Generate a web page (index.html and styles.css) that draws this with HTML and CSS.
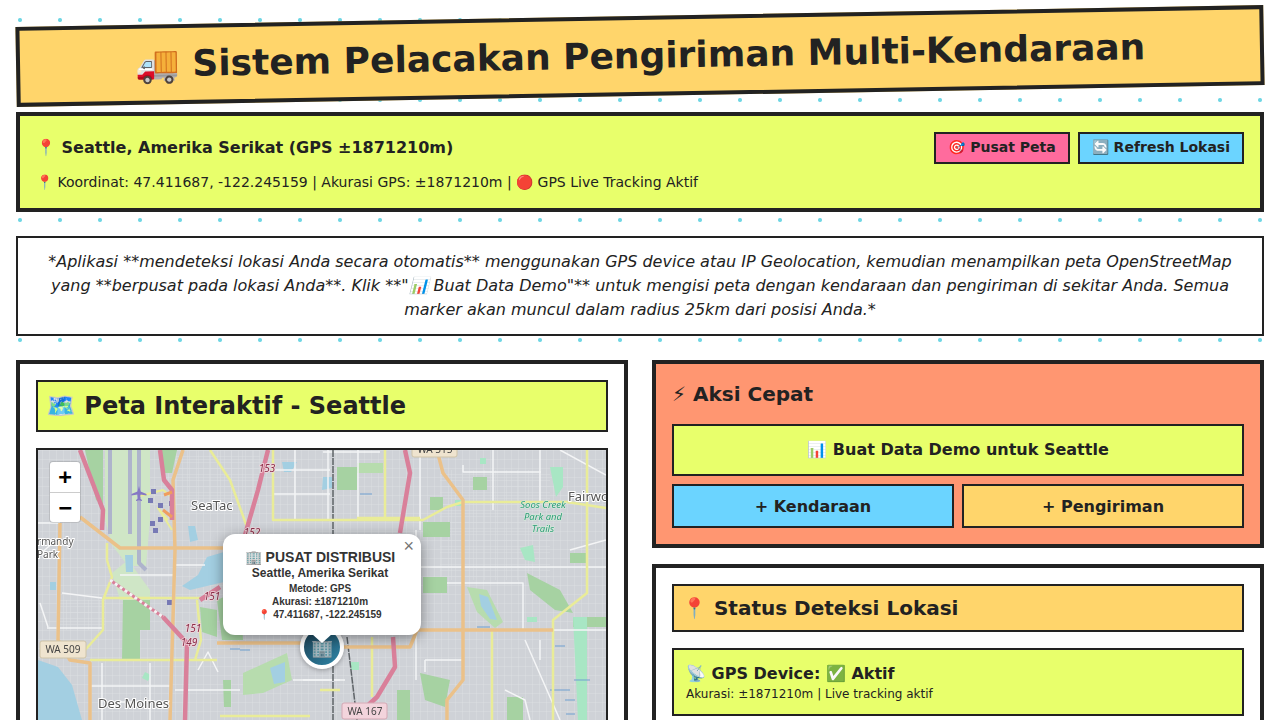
FILE: index.html
```html
<!DOCTYPE html>
<html lang="id">
  <head>
    <meta charset="UTF-8" />
    <meta name="viewport" content="width=device-width, initial-scale=1" />
    <title>Sistem Pelacakan Pengiriman Multi-Kendaraan</title>
    <link rel="stylesheet" href="styles.css">
  </head>
  <body>
    <header class="page-title">
      <h1>🚚 Sistem Pelacakan Pengiriman Multi-Kendaraan</h1>
    </header>

    <section class="location-bar">
      <div class="location-top">
        <strong class="location-name">📍 Seattle, Amerika Serikat (GPS ±1871210m)</strong>
        <div class="location-buttons">
          <button class="btn-small pink">🎯 Pusat Peta</button>
          <button class="btn-small blue">🔄 Refresh Lokasi</button>
        </div>
      </div>
      <p class="location-coords">📍 Koordinat: 47.411687, -122.245159 | Akurasi GPS: ±1871210m | 🔴 GPS Live Tracking Aktif</p>
    </section>

    <p class="intro">*Aplikasi **mendeteksi lokasi Anda secara otomatis** menggunakan GPS device atau IP Geolocation, kemudian menampilkan peta OpenStreetMap yang **berpusat pada lokasi Anda**. Klik **"📊 Buat Data Demo"** untuk mengisi peta dengan kendaraan dan pengiriman di sekitar Anda. Semua marker akan muncul dalam radius 25km dari posisi Anda.*</p>

    <div class="columns">
      <section class="card">
        <h2 class="card-heading lime">🗺️ Peta Interaktif - Seattle</h2>
        <div class="map">
          <svg class="map-tiles" viewBox="38 450 568 398" width="568" height="398" xmlns="http://www.w3.org/2000/svg">
            <defs>
              <pattern id="streets" width="7" height="9" patternUnits="userSpaceOnUse">
                <path class="street-grid" d="M0 0H7M0 0V9" />
              </pattern>
              <pattern id="streets-wide" width="11" height="6" patternUnits="userSpaceOnUse">
                <path class="street-grid" d="M0 0H11M0 0V6" />
              </pattern>
            </defs>
            <rect class="land" x="38" y="450" width="568" height="398" />
            <rect fill="url(#streets)" x="38" y="450" width="568" height="398" />
            <rect fill="url(#streets-wide)" x="440" y="470" width="110" height="110" />
            <rect fill="url(#streets-wide)" x="60" y="600" width="45" height="30" />
            <rect fill="url(#streets-wide)" x="175" y="450" width="85" height="60" />

            <!-- parks and woods -->
            <path class="open" d="M105 450H150V520L146 566H128L112 545 105 520Z" />
            <path class="open" d="M112 573L128 560 150 590 150 604 120 600Z" />
            <path class="wood" d="M85 450H103V505L96 500Z" />
            <path class="wood" d="M160 450H177L172 473 163 473Z" />
            <path class="wood" d="M123 600H150V630H140V660H122Z" />
            <path class="wood" d="M217 600L240 590 243 640 222 640Z" />
            <path class="wood" d="M200 607L217 610 217 637 202 632Z" />
            <path class="wood soft" d="M243 673L287 653 292 680 263 693 243 695Z" />
            <path class="wood" d="M223 680H231V707H224Z" />
            <path class="wood" d="M337 467H357V490H337Z" />
            <path class="wood soft" d="M357 463H383V473H357Z" />
            <path class="wood" d="M430 497H443V510H430ZM423 522H450V537H423ZM423 577H447V593H423Z" />
            <path class="wood" d="M473 477H487V490H473ZM570 553H587V563H570ZM573 617H606V627H573Z" />
            <path class="wood" d="M527 573L560 590 573 613 555 610 530 590Z" />
            <path class="wood" d="M507 697H523V720H507ZM420 673L450 680 445 707 425 700ZM397 690H410V720H397Z" />
            <path class="wood soft" d="M467 587L487 590 503 622 495 628 477 612Z" />
            <path class="mint" d="M550 467H563V487L556 497ZM520 548L533 545 535 562 525 560Z" />
            <path class="mint" d="M573 617H587V720H578Z" />
            <path class="mint" d="M527 617H537V622H527ZM145 672L151 675 148 681 142 678ZM351 662H359V670H351Z" />
            <path class="mint" d="M480 458H486V464H480ZM455 500H462V506H455Z" />

            <!-- water -->
            <path class="water" d="M38 660L58 667 72 685 82 720H38Z" />
            <path class="water" d="M207 557L224 552 224 582 190 590 182 586 198 575Z" />
            <path class="water" d="M270 668L285 662 285 682 274 684ZM125 555L133 555 133 572 126 572Z" />
            <path class="water" d="M479 594L488 597 497 620 490 619 481 606Z" />
            <path class="water" d="M282 462L297 462 291 472 284 472ZM323 477L332 477 332 488 322 490Z" />
            <path class="water" d="M188 526L195 526 198 540 190 542ZM50 582L56 582 56 590 50 590Z" />
            <path class="stream" d="M360 494H372M477 627H490M550 690H570M565 700H575M566 714H575M574 680H590M240 650H250M230 649H240M555 646H565" />

            <!-- minor roads -->
            <path class="road-white" d="M38 523H60M38 556L56 540M62 593L102 598M47 628H103M40 603L48 627M120 575H175M175 565H205" />
            <path class="road-white" d="M102 663V720M150 663V720M90 686H170M175 690H240M108 702H170" />
            <path class="road-white" d="M198 670L208 652 218 672M303 680H340M230 716H310" />
            <path class="road-white" d="M295 450V520M273 470H330M273 494H330M323 452H380M293 680H345" />
            <path class="road-white" d="M328 450V520M358 450V518M420 450V530M416 530L416 560" />
            <path class="road-white" d="M463 465V472H541M493 450V510M540 450V502M420 567H606M447 583H523V630" />
            <path class="road-white" d="M425 660H462M425 660V672M416 600V680M560 450L606 475M606 630H553M606 540L570 550" />
            <path class="road-white" d="M505 690L525 700 530 720M540 640V660M525 640L560 720" />

            <!-- railway and airport taxiways -->
            <path class="rail" d="M333 450V720M347 637L357 720" />
            <path class="runway" d="M110 450V534M130 450V534M139 450V563L146 570" />
            <path class="taxi" d="M140 496L163 490 172 497M168 520L158 508 172 530" />
            <path class="airport" d="M151 489h5v5h-5zM148 498h5v5h-5zM158 503h5v5h-5zM169 501h5v5h-5zM150 521h5v5h-5zM158 517h5v5h-5zM153 528h5v5h-5zM167 600h5v5h-5z" />
            <path class="plane" d="M139 486l1.500 5.500 6 2.500v1.500l-6-1-.5 4 2 1.500v1l-3-.8-3 .8v-1l2-1.500-.5-4-6 1v-1.500l6-2.500z" />

            <!-- secondary roads -->
            <path class="road-yellow" d="M210 450L230 480 247 527M273 450V520H423L447 507 463 502H567L606 508" />
            <path class="road-yellow" d="M587 450V593L553 620V720M492 630V720M372 637V697M385 450V520M357 518H420" />
            <path class="road-yellow" d="M103 598H200M197 600L201 640 195 660M107 560L112 577 103 600V630L85 650M90 660H217" />
            <path class="road-yellow" d="M320 690H340M220 716H310M107 543L107 560" />

            <!-- primary roads -->
            <path class="road-orange" d="M183 450L173 480 175 550 170 720M80 517L120 548H223M60 523L58 640 70 660 90 663V720" />
            <path class="road-orange" d="M217 643H303M343 647H410L417 630H553M437 450L443 473 463 500V680L447 700V720" />

            <!-- motorways -->
            <path class="road-pink" d="M80 450L103 510 102 530M160 450L164 480 172 490 172 520" />
            <path class="road-pink" d="M268 450L258 490 245 535M405 450L410 473 400 533M393 637L395 667 377 697 365 708" />
            <path class="road-pink" d="M163 617L187 643 185 720M220 587L200 600" />
            <path class="road-pink-thin" d="M110 580L163 617" />
            <path class="road-dash" d="M110 580L163 617" />
            <path class="road-link" d="M163 510L172 517M164 495L172 492" />

            <!-- labels -->
            <text class="label" x="191" y="510">SeaTac</text>
            <text class="label small" x="37" y="545">rmandy</text>
            <text class="label small" x="37" y="558">Park</text>
            <text class="label" x="98" y="708">Des Moines</text>
            <text class="label" x="568" y="501">Fairwood</text>
            <text class="park-label" x="543" y="508">Soos Creek</text>
            <text class="park-label" x="543" y="520">Park and</text>
            <text class="park-label" x="543" y="532">Trails</text>
            <text class="ref" x="267" y="472">153</text>
            <text class="ref" x="252" y="536">152</text>
            <text class="ref" x="212" y="600">151</text>
            <text class="ref" x="193" y="632">151</text>
            <text class="ref" x="189" y="646">149</text>

            <rect class="shield" x="40" y="641" width="46" height="17" rx="2" />
            <text class="shield-text" x="63" y="653">WA 509</text>
            <rect class="shield" x="412" y="438" width="45" height="19" rx="2" />
            <text class="shield-text" x="435" y="453">WA 515</text>
            <rect class="shield pinkish" x="342" y="703" width="45" height="16" rx="2" />
            <text class="shield-text" x="365" y="715">WA 167</text>
          </svg>

          <div class="zoom-control">
            <span class="zoom-btn">+</span>
            <span class="zoom-btn">−</span>
          </div>

          <div class="marker"><span class="marker-icon">🏢</span></div>

          <div class="popup">
            <span class="popup-close">×</span>
            <div class="popup-title">🏢 PUSAT DISTRIBUSI</div>
            <div class="popup-sub">Seattle, Amerika Serikat</div>
            <div class="popup-line">Metode: GPS</div>
            <div class="popup-line">Akurasi: ±1871210m</div>
            <div class="popup-line">📍 47.411687, -122.245159</div>
            <span class="popup-tip"></span>
          </div>
        </div>
      </section>

      <div class="side">
        <section class="card orange">
          <h3 class="quick-title">⚡ Aksi Cepat</h3>
          <button class="btn-big lime">📊 Buat Data Demo untuk Seattle</button>
          <div class="btn-row">
            <button class="btn-mid blue">+ Kendaraan</button>
            <button class="btn-mid yellow">+ Pengiriman</button>
          </div>
        </section>

        <section class="card">
          <h2 class="card-heading yellow status-heading">📍 Status Deteksi Lokasi</h2>
          <div class="status-item">
            <div class="status-name">📡 GPS Device: ✅ Aktif</div>
            <div class="status-note">Akurasi: ±1871210m | Live tracking aktif</div>
          </div>
        </section>
      </div>
    </div>
  </body>
</html>
```

FILE: styles.css
```css
body {
  margin: 0;
  padding: 16px;
  font-family: "DejaVu Sans", sans-serif;
  color: #222;
  background-color: #fff;
  background-image: radial-gradient(circle, #6fd6e4 1.5px, transparent 2.5px);
  background-size: 40px 40px;
}

h1, h2, h3, p {
  margin: 0;
}

button {
  font-family: inherit;
  color: #222;
  cursor: pointer;
}

.lime { background-color: #e8ff6b; }
.yellow { background-color: #ffd56b; }
.blue { background-color: #6bd4ff; }
.pink { background-color: #ff6b9d; }

.page-title {
  height: 80px;
  box-sizing: border-box;
  margin-bottom: 16px;
  display: flex;
  align-items: center;
  justify-content: center;
  background-color: #ffd56b;
  border: 4px solid #222;
  transform: rotate(-1deg);
}

.page-title h1 {
  font-size: 36px;
  font-weight: bold;
}

.location-bar {
  height: 100px;
  box-sizing: border-box;
  padding: 16px;
  margin-bottom: 24px;
  background-color: #e8ff6b;
  border: 4px solid #222;
}

.location-top {
  display: flex;
  align-items: center;
  justify-content: space-between;
}

.location-name {
  padding-bottom: 2px;
  font-size: 16px;
}

.location-buttons {
  display: flex;
  gap: 8px;
}

.btn-small {
  height: 32px;
  padding: 0 12px 2px;
  font-size: 14px;
  font-weight: bold;
  border: 2px solid #222;
}

.location-coords {
  margin-top: 8px;
  font-size: 14px;
  line-height: 20px;
}

.intro {
  padding: 12px 16px;
  margin-bottom: 24px;
  font-size: 16px;
  font-style: italic;
  line-height: 24px;
  text-align: center;
  background-color: #fff;
  border: 2px solid #222;
}

.columns {
  display: grid;
  grid-template-columns: 1fr 1fr;
  gap: 24px;
  align-items: start;
}

.side {
  display: flex;
  flex-direction: column;
  gap: 16px;
}

.card {
  padding: 16px;
  background-color: #fff;
  border: 4px solid #222;
}

.card.orange {
  background-color: #ff9671;
}

.card-heading {
  height: 52px;
  box-sizing: border-box;
  display: flex;
  align-items: center;
  padding: 0 8px;
  margin-bottom: 16px;
  font-size: 24px;
  border: 2px solid #222;
}

.status-heading {
  height: 48px;
  font-size: 20px;
}

/* map */
.map {
  position: relative;
  height: 398px;
  overflow: hidden;
  border: 2px solid #222;
}

.map-tiles {
  display: block;
  filter: blur(0.4px);
}

.land { fill: #cfd2d7; }
.street-grid { fill: none; stroke: #dcdee1; stroke-width: 1; }
.open { fill: #cfe6c6; }
.wood { fill: #a6d2a2; }
.wood.soft { fill: #b7dcae; }
.mint { fill: #a8e6c4; }
.water { fill: #a3cfe2; }
.stream { fill: none; stroke: #6f9fd0; stroke-width: 1; }

.road-white, .road-yellow, .road-orange, .road-pink, .road-pink-thin, .road-dash, .road-link,
.rail, .runway, .taxi {
  fill: none;
  stroke-linejoin: round;
}

.road-white { stroke: #f4f5f6; stroke-width: 1.5; }
.road-yellow { stroke: #e9ec98; stroke-width: 2.5; }
.road-orange { stroke: #ebc189; stroke-width: 3.5; }
.road-pink { stroke: #d9809a; stroke-width: 4.5; }
.road-pink-thin { stroke: #d9809a; stroke-width: 3; }
.road-dash { stroke: #f4f4f4; stroke-width: 3; stroke-dasharray: 3 3; }
.road-link { stroke: #ef9d5e; stroke-width: 3; }
.rail { stroke: #5f6468; stroke-width: 1.5; stroke-dasharray: 7 1; }
.runway { stroke: #aeb4cc; stroke-width: 4; }
.taxi { stroke: #e9ec98; stroke-width: 2; }
.airport { fill: #7779b5; }
.plane { fill: #8578c4; }

.label { font: 13px "Noto Sans", sans-serif; fill: #555; stroke: #fff; stroke-width: 2px; paint-order: stroke; }
.label.small { font-size: 10px; }
.park-label { font: italic 9.5px "Noto Sans", sans-serif; fill: #2f9a78; text-anchor: middle; stroke: #d7f0dc; stroke-width: 1px; paint-order: stroke; }
.ref { font: italic 10px "Noto Sans", sans-serif; fill: #8c2f4a; text-anchor: middle; stroke: #f1d6dc; stroke-width: 1.5px; paint-order: stroke; }
.shield { fill: #efe4cf; stroke: #cfc4a8; stroke-width: 1; }
.shield.pinkish { fill: #f3d4dc; stroke: #d4a8b4; }
.shield-text { font: 10px "Noto Sans", sans-serif; fill: #444; text-anchor: middle; }

.zoom-control {
  position: absolute;
  top: 12px;
  left: 12px;
  width: 30px;
  background-color: #fff;
  border-radius: 3px;
  box-shadow: 0 0 0 1px rgba(0, 0, 0, 0.12);
}

.zoom-btn {
  display: flex;
  align-items: center;
  justify-content: center;
  height: 29.5px;
  font: bold 22px "DejaVu Sans Mono", monospace;
  color: #000;
}

.zoom-btn + .zoom-btn {
  border-top: 1px solid #ccc;
}

.marker {
  position: absolute;
  left: 262px;
  top: 175px;
  width: 36px;
  height: 36px;
  display: flex;
  align-items: center;
  justify-content: center;
  border: 4px solid #fff;
  border-radius: 50%;
  background: linear-gradient(135deg, #1c3f52, #2f86a8);
  box-shadow: 0 1px 5px rgba(0, 0, 0, 0.3);
}

.marker-icon {
  font-size: 18px;
  opacity: 0.7;
}

.popup {
  position: absolute;
  left: 185px;
  top: 84px;
  width: 198px;
  height: 101px;
  box-sizing: border-box;
  padding: 15px 4px 0 0;
  font-family: "Liberation Sans", Arial, sans-serif;
  font-weight: bold;
  text-align: center;
  color: #333;
  background-color: #fff;
  border-radius: 12px;
  box-shadow: 0 3px 14px rgba(0, 0, 0, 0.4);
}

.popup-close {
  position: absolute;
  top: 3px;
  right: 7px;
  font-size: 18px;
  font-weight: normal;
  line-height: 18px;
  color: #757575;
}

.popup-title {
  font-size: 14px;
  line-height: 16px;
}

.popup-sub {
  margin: 1px 0 2px;
  font-size: 12px;
  line-height: 14px;
}

.popup-line {
  font-size: 10px;
  line-height: 13px;
}

.popup-tip {
  position: absolute;
  left: 89px;
  top: 100px;
  width: 0;
  height: 0;
  border-left: 10px solid transparent;
  border-right: 10px solid transparent;
  border-top: 9px solid #fff;
}

/* quick actions */
.quick-title {
  height: 44px;
  font-size: 20px;
  line-height: 28px;
}

.btn-big {
  display: block;
  width: 100%;
  height: 52px;
  padding-bottom: 3px;
  font-size: 16px;
  font-weight: bold;
  border: 2px solid #222;
}

.btn-row {
  display: grid;
  grid-template-columns: 1fr 1fr;
  gap: 8px;
  margin-top: 8px;
}

.btn-mid {
  height: 44px;
  font-size: 16px;
  font-weight: bold;
  border: 2px solid #222;
}

.status-item {
  padding: 12px 12px 0;
  height: 68px;
  box-sizing: border-box;
  background-color: #e8ff6b;
  border: 2px solid #222;
}

.status-name {
  font-size: 16px;
  font-weight: bold;
  line-height: 24px;
}

.status-note {
  font-size: 12px;
  line-height: 16px;
}
```
